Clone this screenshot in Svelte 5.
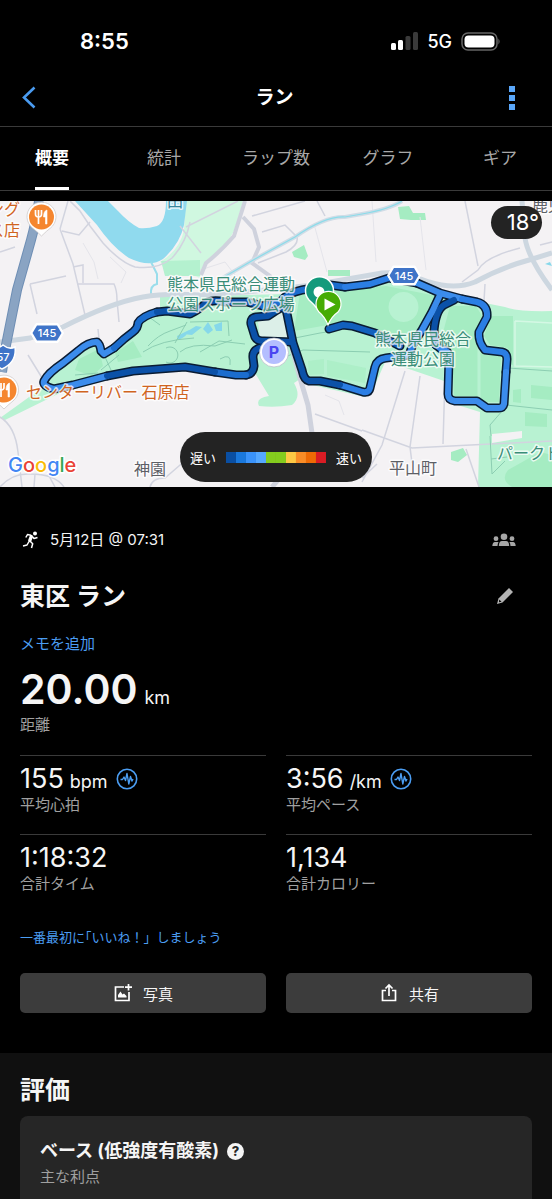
<script>
  const tabs = ['概要', '統計', 'ラップ数', 'グラフ', 'ギア'];
  let active = $state('概要');

  const stats = [
    { value: '155', unit: 'bpm', label: '平均心拍', trend: true },
    { value: '3:56', unit: '/km', label: '平均ペース', trend: true },
    { value: '1:18:32', unit: '', label: '合計タイム', trend: false },
    { value: '1,134', unit: '', label: '合計カロリー', trend: false }
  ];

  const speedColors = ['#0a4fa3', '#1a78dc', '#3a93fa', '#55a8ff', '#84cc1e', '#84cc1e', '#fdc844', '#f98c26', '#ee6a05', '#da1c24'];

  // Course pieces, coloured by pace.
  const segments = [
    { c: '#3b8cec', d: 'M107 376 L73 385 L54 389 Q42 386 44 381 Q48 373 63 363 L78 351 Q88 342 97 342 Q100 344 101 351 L104 354 L114 348' },
    { c: '#1c6dce', d: 'M114 348 L124 339 L133 332 Q138 328 138 323 Q142 316 157 312' },
    { c: '#0b51a8', d: 'M157 312 L167 311 L190 314 Q200 309 206 303 Q213 299 225 302 L247 302 L263 306' },
    { c: '#1c6dce', d: 'M263 306 L280 302 Q287 293 302 290 L330 285 L345 287' },
    { c: '#2b7ee4', d: 'M345 287 L370 284 L389 278 L417 283' },
    { c: '#3b8cec', d: 'M417 283 L440 293 L462 299' },
    { c: '#2b7ee4', d: 'M462 299 L477 302 Q488 305 487 317 L479 332 Q478 342 485 350 L502 352 Q507 353 507 359 L506 372' },
    { c: '#3b8cec', d: 'M506 372 L504 404 Q503 408 499 408 L487 408 L477 401 L455 401 Q448 400 448 394 L449 358 Q449 350 441 349 L436 345' },
    { c: '#0b51a8', d: 'M436 345 L434 330 Q436 310 444 305 L454 300' },
    { c: '#3b8cec', d: 'M440 295 L432 312 L422 330 L413 344' },
    { c: '#2b7ee4', d: 'M413 344 L409 355 L386 358 Q377 359 375 367 L370 388 Q369 393 363 392 L340 385' },
    { c: '#0b51a8', d: 'M340 385 L320 381 L309 381 Q304 380 302 370 L293 343 L285 304' },
    { c: '#1260bd', d: 'M329 329 L343 325 L352 326 L375 333 L400 346' },
    { c: '#0b51a8', d: 'M286 305 L277 310 L268 316 L256 317 Q250 318 251 324 L255 337 Q257 341 264 341 L292 342' },
    { c: '#0b51a8', d: 'M262 347 Q252 350 253 358 L254 366 Q253 374 246 375' },
    { c: '#1c6dce', d: 'M246 375 L236 375 L215 372' },
    { c: '#0b51a8', d: 'M215 372 L185 367 L133 371 L107 376' }
  ];

  const fineRoads = [
    'M70 201 L80 211 L90 226 L103 243 Q120 262 135 267 Q158 270 172 258 Q186 243 190 222',
    'M60 229 L68 201 M60 229 L73 264 L85 315 M73 267 L83 265 L83 283 M62 231 L79 235 L90 222 M77 284 L114 284 Q117 290 117 300 L119 322 M30 284 L37 314 M30 284 L66 276 M0 252 L15 247 M98 329 L99 339',
    'M180 226 L201 253 M186 227 L238 201 M262 232 L285 225 L297 237 Q299 245 286 252 L258 263 M252 216 L305 201 M317 201 L325 216',
    'M465 201 L478 266 M462 282 L478 270 Q485 257 520 248 M485 284 L484 301 M540 245 L552 242',
    'M405 371 L382 445 L362 482 M420 376 L410 447 L412 463 M362 430 L412 448 L552 441 M377 464 L362 478 M445 376 L443 444 M466 449 L479 487 M315 414 L362 431',
    'M0 417 Q15 426 18 452 L22 487 M0 487 Q12 473 30 474 Q55 474 64 487 M35 474 L34 487 M48 474 L55 487 M28 355 L52 394 M150 487 Q152 478 165 478 L187 459'
  ];

  const parkPaths = [
    'M75 375 L98 373 M101 370 L119 355 M148 346 Q158 335 170 331 L186 325 M143 352 Q160 340 194 338 M180 352 Q190 343 215 346 L232 340 M200 352 L219 341 L245 344 M166 362 A8 8 0 1 0 166 348',
    'M290 339 L320 333 L340 330 M190 322 L228 321 L229 336 M160 325 L149 317 M175 343 L187 322 M105 357 L111 370 M220 359 Q232 352 230 365 M285 357 L303 350 L370 352',
    'M491 436 L490 425 L503 410 M490 436 L492 474 L505 461 M491 459 L507 457 M506 405 L552 410 M508 368 L552 371'
  ];
</script>

<svelte:head><title>ラン</title></svelte:head>

<div class="page">
  <div class="status">
    <span class="time">8:55</span>
    <div class="signals">
      <svg width="28" height="18" viewBox="0 0 28 18" aria-hidden="true">
        <rect x="1" y="11" width="5" height="7" rx="1.5" fill="#fff" />
        <rect x="8" y="8" width="5" height="10" rx="1.5" fill="#fff" />
        <rect x="15.500" y="4" width="5" height="14" rx="1.5" fill="#3a3a3a" />
        <rect x="23" y="0" width="5" height="18" rx="1.5" fill="#3a3a3a" />
      </svg>
      <span class="net">5G</span>
      <svg width="40" height="19" viewBox="0 0 40 19" aria-hidden="true">
        <rect x="1" y="1" width="35" height="17" rx="6" fill="none" stroke="#666" stroke-width="1.5" />
        <rect x="3.500" y="3.500" width="30" height="12" rx="4" fill="#fff" />
        <path d="M37.500 6.500 Q39.500 9.500 37.500 12.500Z" fill="#777" />
      </svg>
    </div>
  </div>

  <header>
    <button class="icon" aria-label="戻る">
      <svg width="14" height="24" viewBox="0 0 14 24"><path d="M12.500 1.500 L2 11.500 L12.500 21.500" fill="none" stroke="#4a9bf0" stroke-width="2.600" /></svg>
    </button>
    <h1>ラン</h1>
    <button class="icon" aria-label="その他">
      <svg width="6" height="24" viewBox="0 0 6 24" fill="#5aa7fa"><rect width="6" height="6" /><rect y="9" width="6" height="6" /><rect y="18" width="6" height="6" /></svg>
    </button>
  </header>

  <nav>
    <div class="tabs">
      {#each tabs as tab}
        <button class="tab" class:active={tab === active} onclick={() => (active = tab)}><span>{tab}</span></button>
      {/each}
    </div>
  </nav>

  <section class="map" aria-label="コースマップ">
    <svg class="canvas" viewBox="0 201 552 286" preserveAspectRatio="xMidYMid slice">
      <rect x="0" y="201" width="552" height="286" fill="#f4f2f4" />

      <!-- parks -->
      <g fill="#d0f8e0">
        <path d="M186 201 L243 201 L237 222 Q232 240 218 252 L202 268 L200 278 L160 262 Q180 250 184 230Z" />
      </g>
      <path d="M161 261 L200 260 L200 276 L165 276Z" fill="#b4f1cf" />
      <g fill="#b8f2d2">
        <path d="M160 297 L290 294 L300 288 L420 281 L445 294 L480 302 L505 307 Q520 312 552 311 L552 487 L478 487 L480 412 L448 402 L447 382 L406 368 L386 360 L372 392 L365 397 L308 384 L300 379 L294 383 Q302 397 292 405 Q275 408 259 406 Q255 398 269 396 L255 373 L247 378 L190 371 L130 374 L60 393 L5 420 L0 418 L43 387 L46 379 L80 352 L98 340 L104 351 L137 329 L142 317 L160 310Z" />
      </g>
      <g fill="#a5ecc2">
        <path d="M79 359 L99 349 L103 366 L92 376 L75 370Z M115 353 L133 341 L142 357 L118 362Z" />
        <path d="M300 293 L386 286 L437 296 L418 330 L395 338 L345 322 L294 331Z" />
        <path d="M450 306 L476 306 L482 316 L474 333 L480 350 L501 357 L499 402 L484 402 L474 396 L454 396 L452 352 L440 344Z" />
        <path d="M491 316 L513 316 L513 365 L509 364 L508 348 L490 345 L484 336Z M531 385 L552 387 L552 400 L531 398Z M525 412 L547 414 L547 427 L525 426Z M513 390 L521 389 L521 403 L513 402Z" />
        <path d="M512 487 Q500 480 508 470 L540 452 L552 455 L552 487Z" />
        <path d="M292 252 L304 245 L308 256 L305 260 L294 257Z M398 207 L409 206 L413 213 L425 213 L426 220 L411 220 L400 219Z M328 270 L350 270 L350 276 L328 276Z M451 452 L463 448 L467 455 L458 462 L451 460Z" />
        <path d="M308 361 L324 359 L324 374 L309 375Z M327 360 L366 368 L365 383 L327 376Z" opacity=".6" />
      </g>
      <path d="M403 292 A15 15 0 1 0 404 292Z" fill="#b8f2d2" />
      <path d="M515 321 L552 323 M515 321 L515 366 L552 367" fill="none" stroke="#d4f8e4" stroke-width="1.500" />
      <path d="M492 434 L522 431 L522 438 L492 443Z M435 300 L440 299 L436 310Z" fill="#f4f2f4" />
      <path d="M258 322 L284 312 L291 338 L260 337Z" fill="#dcefe8" />
      <path d="M479 348V405" stroke="#b8f2d2" stroke-width="3" />

      <!-- river and ponds -->
      <path d="M75 201 L97 225 Q112 247 129 258 Q150 268 163 259 Q180 244 184 225 L187 201 L166 201 Q166 222 157 226 Q147 229 139 228 Q128 222 118 211 L108 201Z" fill="#90daee" />
      <path d="M151 262 L157 274 L157 284 Q150 285 151 295" fill="none" stroke="#9addeb" stroke-width="2" />
      <path d="M177 336 L189 330 Q187 337 178 340Z M183 334 L196 326 L202 327 L192 335Z M203 329 L208 322 L213 330 L208 334Z M214 325 L222 322 L222 331 L216 331Z M545 264 L550 262 L552 266Z" fill="#86d8ea" />

      <!-- minor roads -->
      <g fill="none" stroke="#d2d4df" stroke-width="1.500">
        {#each fineRoads as d}<path {d} />{/each}
      </g>
      <g fill="none" stroke="#e4e4ea" stroke-width="1">
        <path d="M372 201 L376 262 M420 217 L426 270 M83 243 L94 262 L98 279 M110 257 L126 272 L121 283 M314 224 L327 272 M325 395 L339 401 L344 415 M200 270 L225 262 L235 275" />
      </g>
      <g fill="none" stroke="#8cceb2" stroke-width="1">
        {#each parkPaths as d}<path {d} />{/each}
      </g>
      <g fill="none" stroke="#cfd2dd" stroke-width="4">
        <path d="M245 201 L240 217 L234 236 Q220 252 206 263 L201 275" />
        <path d="M243 217 L254 229 L259 247 L252 263 L270 276 L275 291" />
        <path d="M291 344 L300 378 L308 405 L313 440 M313 440 L295 460 L272 487" stroke-width="5" />
      </g>
      <path d="M219 280 L255 259 L295 237 Q325 216 345 217 L362 214 Q390 209 402 201" fill="none" stroke="#d0dce6" stroke-width="4" />
      <path d="M219 280 L255 259 L295 237 Q325 216 345 217 L362 214 Q390 209 402 201" fill="none" stroke="#8bdcea" stroke-width="1.200" />

      <!-- highways -->
      <g fill="none" stroke="#cdd7e0" stroke-width="5">
        <path d="M0 342 L30 338 L63 327 Q110 303 143 297 Q165 293 199 295 L247 292 L313 285 L382 273 Q400 271 429 282 Q455 290 475 282 Q500 268 529 260 L552 253" />
        <path d="M522 201 L525 238 Q528 258 552 290" />
      </g>
      <path d="M39 201 Q36 222 31 240 L17 290 L6 345 L2 372" fill="none" stroke="#6e8eb4" stroke-width="10" />
      <path d="M39 201 Q36 222 31 240 L17 290 L6 345 L2 372" fill="none" stroke="#8aa4c3" stroke-width="8" />

      <!-- course -->
      <g fill="none" stroke-linecap="round" stroke-linejoin="round">
        {#each segments as s}<path d={s.d} stroke="#0a1c33" stroke-width="9" />{/each}
        {#each segments as s}<path d={s.d} stroke={s.c} stroke-width="6" />{/each}
      </g>

      <!-- route shields -->
      {#each [[47, 333], [404, 275.5]] as [x, y]}
        <g transform="translate({x} {y})">
          <path d="M-16.500 0 L-11 -9.500 L11 -9.500 L16.500 0 L11 9.500 L-11 9.500Z" fill="#fff" stroke="#fff" stroke-width="1" stroke-linejoin="round" />
          <path d="M-14.500 0 L-10 -7.500 L10 -7.500 L14.500 0 L10 7.500 L-10 7.500Z" fill="#3f74c8" />
          <text y="4" class="shield" text-anchor="middle">145</text>
        </g>
      {/each}
      <path d="M-12 347 Q-3 350 3 345 Q9 350 15 347 Q17 362 2 369 Q-12 362 -12 347Z" fill="#3f74c8" stroke="#fff" stroke-width="1.500" />
      <text x="3" y="361" class="shield" text-anchor="middle">57</text>

      <!-- map labels -->
      <g class="label" fill="#3a8d78">
        <text x="167" y="290">熊本県民総合運動</text>
        <text x="167" y="310">公園スポーツ広場</text>
        <text x="375" y="345">熊本県民総合</text>
        <text x="391" y="365">運動公園</text>
        <text x="497" y="459">パークドーム</text>
      </g>
      <g class="label" fill="#d0641f">
        <text x="-12" y="215">ング</text>
        <text x="-12" y="236">ス店</text>
        <text x="26" y="398">センターリバー 石原店</text>
      </g>
      <g class="label" fill="#5d6066">
        <text x="134" y="475">神園</text>
        <text x="389" y="474">平山町</text>
        <text x="532" y="211">鹿児</text>
      </g>
      <text x="167" y="207" class="label" fill="#35869c">田</text>

      <!-- restaurants -->
      {#each [[41.500, 217], [4, 390]] as [x, y]}
        <g transform="translate({x} {y})">
          <path d="M0 19 Q-5 14 -9 11 A14.500 14.500 0 1 1 9 11 Q5 14 0 19Z" fill="#fff" stroke="#c8c4c4" stroke-width=".7" />
          <circle r="12.500" fill="#f5862f" />
          <path d="M-6 -7 V-3 Q-6 0 -3 0 V7 M-3 -7 V0 M0 -7 V-3 Q0 0 -3 0" fill="none" stroke="#fff" stroke-width="1.700" />
          <path d="M5.500 -7 Q2 -6 2 0 H4 V7 H5.500Z" fill="#fff" stroke="#fff" stroke-width=".6" />
        </g>
      {/each}

      <!-- parking -->
      <circle cx="274" cy="352.500" r="14.500" fill="#fff" stroke="#b6b9c5" stroke-width=".7" />
      <circle cx="274" cy="352" r="12" fill="#b4beff" />
      <text x="274" y="358" class="parking" text-anchor="middle">P</text>

      <!-- finish and start pins -->
      <path d="M319 311 Q314 304 309 300 A14 14 0 1 1 330 300 Q324 304 319 311Z" fill="#149a7c" stroke="#fff" stroke-width="1.500" />
      <circle cx="319" cy="292" r="5.500" fill="#fff" />
      <path d="M328 325 Q325 317 319 312 A12.500 12.500 0 1 1 338 312 Q331 317 328 325Z" fill="#46ac05" stroke="#fff" stroke-width="1.200" />
      <path d="M324.500 298.500 L335.500 304.500 L324.500 310.500Z" fill="#fff" />

      <text x="8" y="472" class="google"><tspan fill="#4285f4">G</tspan><tspan fill="#ea4335">o</tspan><tspan fill="#fbbc05">o</tspan><tspan fill="#4285f4">g</tspan><tspan fill="#34a853">l</tspan><tspan fill="#ea4335">e</tspan></text>
    </svg>
    <div class="temp">18°</div>
    <div class="legend">
      <span>遅い</span>
      <div class="scale">{#each speedColors as c}<i style:background={c}></i>{/each}</div>
      <span>速い</span>
    </div>
  </section>

  <main>
    <div class="row date">
      <svg width="18" height="20" viewBox="0 0 18 20" aria-hidden="true">
        <circle cx="13" cy="3.500" r="2" fill="#fff" />
        <path d="M9.300 6.500 L7.800 10.500" stroke="#fff" stroke-width="3.400" stroke-linecap="round" fill="none" />
        <path d="M9 5.300 L5.500 4.500 L3.800 7.500 M10.300 6.500 L12 8.500 L15.500 7.500 M8 11 L10.700 13.700 L9.500 18 M7 11.500 L5 15 L1 16" fill="none" stroke="#fff" stroke-width="1.500" stroke-linejoin="round" />
      </svg>
      <span class="when">5月12日 @ 07:31</span>
      <svg width="24" height="14" viewBox="0 0 24 14" fill="#a6a6a6" aria-hidden="true">
        <circle cx="12" cy="3.700" r="3.300" /><circle cx="4" cy="5.700" r="2.400" /><circle cx="20" cy="5.700" r="2.400" />
        <path d="M6.800 13 Q7 8 10 8 H14 Q17 8 17.200 13Z M.3 13 Q.6 9 3 9 H6.500 Q5.700 10.500 5.500 13Z M23.700 13 Q23.400 9 21 9 H17.500 Q18.300 10.500 18.500 13Z" />
      </svg>
    </div>

    <div class="row name">
      <h2>東区 ラン</h2>
      <button class="icon pencil" aria-label="編集">
        <svg width="18" height="18" viewBox="0 0 18 18"><path d="M13 1 L17 5 L6.500 15.500 L1 17 L2.500 11.500Z" fill="#b3b3b3" /><path d="M3.200 12.500 L5.500 14.800 L3 15.300Z" fill="#000" /></svg>
      </button>
    </div>

    <a class="memo" href="#memo">メモを追加</a>

    <div class="distance"><strong>20.00</strong><span class="unit">km</span></div>
    <div class="caption">距離</div>

    <div class="stats">
      {#each stats as s}
        <div class="stat">
          <div class="value">
            <span>{s.value}</span>{#if s.unit}<span class="unit">{s.unit}</span>{/if}
            {#if s.trend}
              <svg width="22" height="22" viewBox="0 0 22 22" fill="none" stroke="#4b9df2" aria-hidden="true">
                <circle cx="11" cy="11" r="9.700" stroke-width="1.600" />
                <path d="M4.500 11.500 H6.500 L8 9 L9.500 12.500 L11 5.500 L12.800 16 L14.500 8.500 L16 13 L17 11" stroke-width="1.400" stroke-linejoin="round" />
              </svg>
            {/if}
          </div>
          <div class="caption">{s.label}</div>
        </div>
      {/each}
    </div>

    <a class="like" href="#like">一番最初に<span class="half">「</span>いいね！」しましょう</a>

    <div class="actions">
      <button>
        <svg width="20" height="20" viewBox="0 0 20 20" fill="none" stroke="#fff" stroke-width="1.700" aria-hidden="true">
          <path d="M11 4 H2.500 V17.500 H16 V9 M15.500 1 V7.500 M12 4.200 H19" /><path d="M5 14.500 V12 L7.500 8.500 L9.500 11.500 L11 10.500 L13.500 13 V14.500Z" fill="#fff" stroke="none" />
        </svg>
        写真
      </button>
      <button>
        <svg width="20" height="20" viewBox="0 0 20 20" fill="none" stroke="#fff" stroke-width="1.700" aria-hidden="true">
          <path d="M7 7.500 H3.500 V17.500 H16.500 V7.500 H13 M10 13 V2.500 M6.500 5.500 L10 2 L13.500 5.500" />
        </svg>
        共有
      </button>
    </div>
  </main>

  <section class="rating">
    <h2>評価</h2>
    <div class="card">
      <h3>ベース (低強度有酸素)
        <button class="help" aria-label="ヘルプ">?</button>
      </h3>
      <p>主な利点</p>
    </div>
  </section>
</div>

<style>
  :global(body) { margin: 0; background: #000; }
  .page {
    min-height: 100vh;
    display: flex;
    flex-direction: column;
    overflow: hidden;
    background: #000;
    color: #f5f5f5;
    font-family: Inter, "Noto Sans CJK JP", sans-serif;
  }
  button { font: inherit; color: inherit; border: 0; background: none; padding: 0; cursor: pointer; }
  h1, h2, h3, p { margin: 0; }
  a { text-decoration: none; color: #4b9df2; }
  svg { display: block; flex: none; }

  .status { display: flex; justify-content: space-between; align-items: center; height: 28px; padding: 27px 51px 0 80px; }
  .time { font-size: 22px; font-weight: 600; line-height: 28px; color: #fff; }
  .signals { display: flex; align-items: center; gap: 9px; }
  .net { font-size: 18px; font-weight: 500; color: #fff; }

  header { display: flex; justify-content: space-between; align-items: center; height: 57px; padding: 14px 37px 0 22px; border-bottom: 1px solid #3a3a3a; }
  header .icon { display: flex; min-width: 6px; }
  h1 { padding-left: 4px; font-size: 19px; line-height: 28px; font-weight: 700; color: #fff; }

  nav { border-bottom: 1px solid #3a3a3a; }
  .tabs { display: grid; grid-template-columns: repeat(5, 1fr); margin: 0 -4px; }
  .tab { display: flex; justify-content: center; font-size: 17px; line-height: 58px; color: #a8a8a8; }
  .tab span { padding-top: 2px; border-bottom: 3px solid transparent; }
  .tab.active { font-weight: 700; color: #fff; }
  .tab.active span { border-color: #fff; }

  .map { position: relative; margin-top: 10px; }
  .canvas { width: 100%; height: auto; aspect-ratio: 552 / 286; }
  .label { font: 400 16px "Noto Sans CJK JP", sans-serif; paint-order: stroke; stroke: #fff; stroke-width: 3px; stroke-opacity: .75; stroke-linejoin: round; }
  .shield { font: 500 11px Inter, sans-serif; fill: #fff; }
  .parking { font: 700 16px Inter, sans-serif; fill: #4a44f0; }
  .google { font: 500 20px Inter, sans-serif; paint-order: stroke; stroke: #fff; stroke-width: 3px; }
  .temp { position: absolute; top: 5px; right: 10px; padding: 0 3px 0 16px; border-radius: 17px; background: #232323; color: #fff; font-size: 22px; line-height: 33px; }
  .legend { position: absolute; left: 50%; bottom: 5px; transform: translateX(-50%); display: flex; align-items: center; gap: 10px; height: 50px; padding: 0 10px; border-radius: 25px; background: #232323; color: #fff; font-size: 13px; white-space: nowrap; }
  .scale { display: flex; }
  .scale i { width: 10px; height: 11px; }

  main { padding: 40px 20px; }
  .row { display: flex; align-items: center; justify-content: space-between; }
  .date { height: 26px; padding: 0 16px 0 2px; gap: 10px; }
  .when { flex: 1; font-size: 15px; line-height: 26px; }
  .name { margin-top: 23px; padding-right: 18px; }
  .name h2, .rating h2 { font-size: 25px; line-height: 40px; font-weight: 700; }
  .memo { display: block; margin-top: 16px; font-size: 15px; line-height: 24px; }
  .distance { display: flex; align-items: baseline; gap: 7px; margin-top: 8px; line-height: 50px; }
  .distance strong { font-size: 41px; font-weight: 600; }
  .unit { font-size: 18px; line-height: 20px; }
  .caption { font-size: 15px; line-height: 22px; color: #a0a0a0; }
  .stats { display: grid; grid-template-columns: 1fr 1fr; column-gap: 20px; margin-top: 19px; }
  .stat { height: 70px; padding-top: 8px; border-top: 1px solid #3a3a3a; }
  .value { display: flex; align-items: baseline; gap: 6px; font-size: 27px; line-height: 30px; }
  .value svg { align-self: center; margin-left: 2px; }
  .like { display: block; margin-top: 14px; font-size: 13px; line-height: 20px; }
  .half { font-feature-settings: "halt"; }
  .actions { display: grid; grid-template-columns: 1fr 1fr; gap: 20px; margin-top: 26px; }
  .actions button { display: flex; align-items: center; justify-content: center; gap: 10px; height: 40px; border-radius: 5px; background: #3c3c3c; font-size: 15px; }

  .rating { flex: 1; display: flex; flex-direction: column; padding: 17px 20px 0; background: #101010; }
  .card { flex: 1; margin-top: 6px; padding: 22px 20px 10px; border-radius: 8px 8px 0 0; background: #262626; }
  h3 { display: flex; align-items: center; gap: 8px; font-size: 18px; line-height: 26px; font-weight: 700; }
  .help { width: 17px; height: 17px; border-radius: 50%; background: #f5f5f5; color: #262626; font-size: 13px; line-height: 17px; font-weight: 800; text-align: center; }
  .card p { margin-top: 2px; font-size: 15px; line-height: 22px; color: #a0a0a0; }
</style>
